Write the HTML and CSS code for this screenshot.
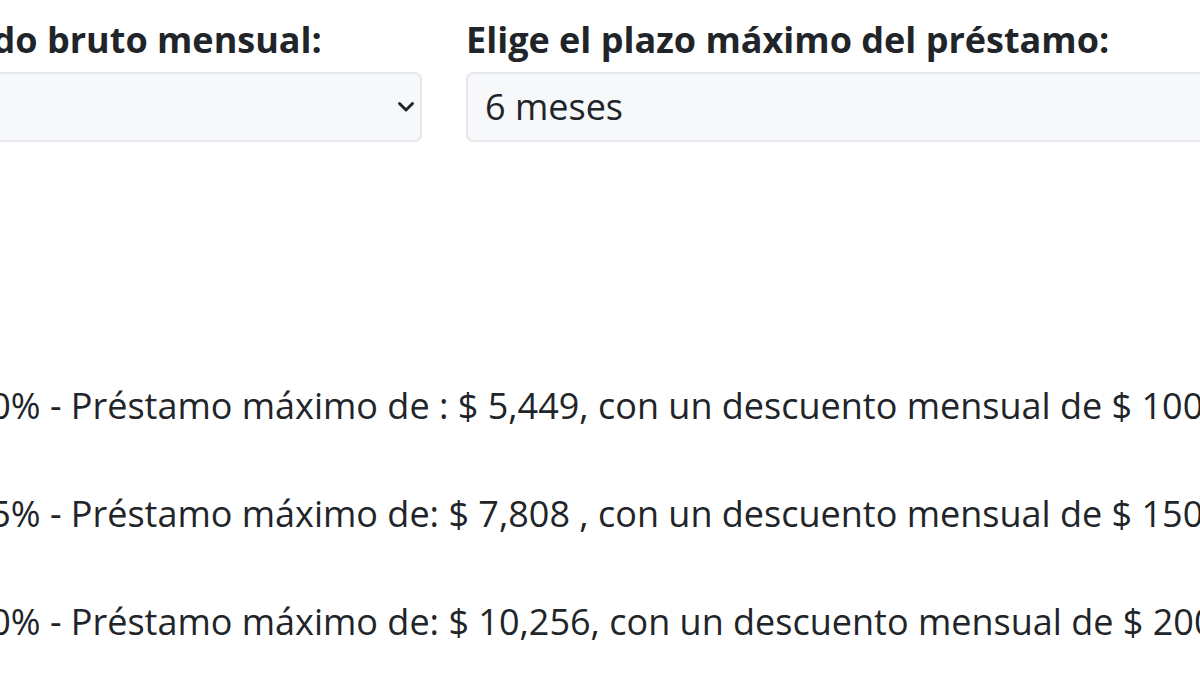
FILE: index.html
```html
<!DOCTYPE html>
<html lang="es">
<head>
<meta charset="utf-8">
<title>Préstamo</title>
<link rel="stylesheet" href="styles.css">
</head>
<body>
<div class="page">
  <div class="form-row">
    <div class="field">
      <label class="field-label">Elige tu sueldo bruto mensual:</label>
      <div class="select-box">
        <span class="select-value"></span>
        <svg class="chevron" width="18" height="12" viewBox="0 0 18 12"><path d="M2.5 2.5 L9 9 L15.5 2.5" fill="none" stroke="#212529" stroke-width="3" stroke-linecap="round" stroke-linejoin="round"/></svg>
      </div>
    </div>
    <div class="field">
      <label class="field-label">Elige el plazo máximo del préstamo:</label>
      <div class="select-box">
        <span class="select-value">6 meses</span>
      </div>
    </div>
  </div>
  <div class="results">
    <p class="result">Descuento del 10% - Préstamo máximo de : $ 5,449, con un descuento mensual de $ 1000</p>
    <p class="result">Descuento del 15% - Préstamo máximo de: $ 7,808 , con un descuento mensual de $ 1500</p>
    <p class="result">Descuento del 20% - Préstamo máximo de: $ 10,256, con un descuento mensual de $ 2000</p>
  </div>
</div>
</body>
</html>
```
FILE: styles.css
```css
html, body {
  margin: 0;
  padding: 0;
  background: #ffffff;
  overflow: hidden;
}
body {
  width: 1200px;
  height: 675px;
  font-family: "Open Sans", "Noto Sans", sans-serif;
  color: #212529;
}
.page {
  margin-left: -223px;
  padding-top: 18px;
}
.form-row {
  display: grid;
  grid-template-columns: 645px 800px;
  column-gap: 44px;
}
.field {
  display: flex;
  flex-direction: column;
}
.field-label {
  font-size: 36px;
  font-weight: 700;
  line-height: 1.2;
  margin-bottom: 11px;
  white-space: nowrap;
}
.select-box {
  box-sizing: border-box;
  height: 70px;
  background: #f7f8f9;
  border: 2px solid #e6e8eb;
  border-radius: 7px;
  display: flex;
  align-items: center;
  justify-content: space-between;
  padding: 0 5px 0 17px;
}
.select-value {
  font-size: 36px;
  line-height: 1;
}
.chevron {
  display: block;
}
.results {
  margin-top: 237px;
  margin-left: -57px;
  display: flex;
  flex-direction: column;
  gap: 54px;
}
.result {
  margin: 0;
  font-size: 36px;
  line-height: 1.5;
  white-space: nowrap;
}
```
